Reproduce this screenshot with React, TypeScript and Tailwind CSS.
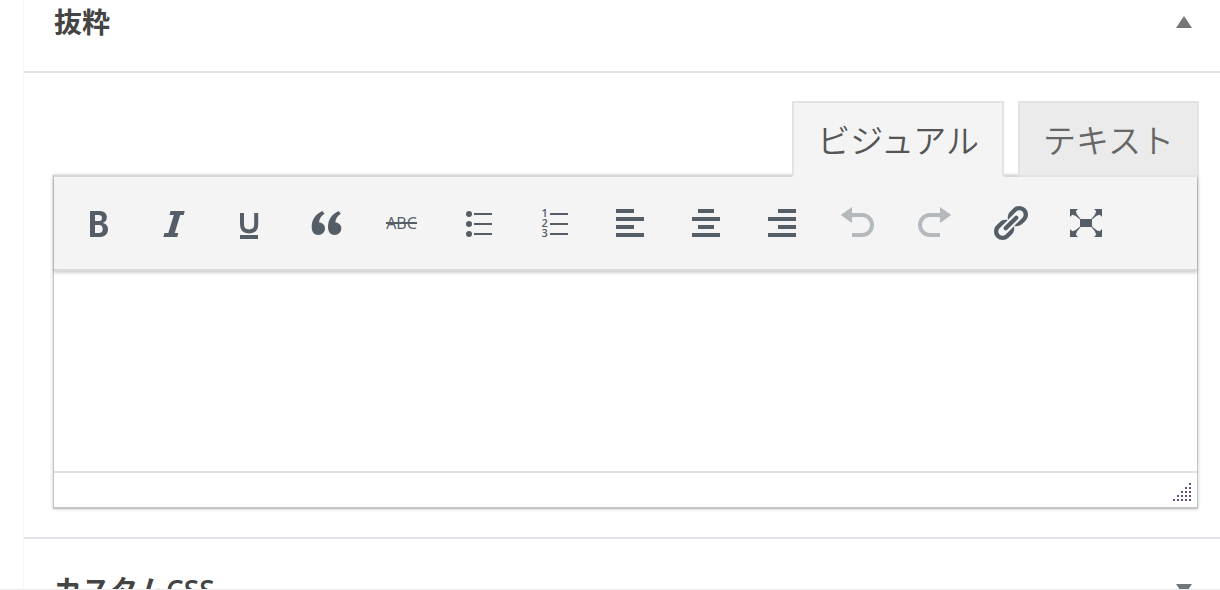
import React, { useState } from "react";

type Tool = { label: string; disabled?: boolean; icon: React.ReactNode };

const UNDO_HEAD = "M2.7 12 14 4v16z";

const tools: Tool[] = [
  {
    label: "太字",
    icon: (
      <path
        fillRule="evenodd"
        d="M12 8h8.600c5.300 0 8.200 2 8.200 6.300 0 2.900-1.500 4.900-4 5.600 3.300.7 5.200 2.900 5.200 6.300 0 5-3.500 7.800-9 7.800h-9zM17 12v6h3.500c2.400 0 3.500-1 3.500-3.100 0-2-1.100-2.900-3.500-2.900zM17 22v8h4c2.500 0 3.700-1.400 3.700-4s-1.200-4-3.700-4z"
      />
    ),
  },
  {
    label: "イタリック",
    icon: <path d="M16.500 8h14.200l-1 4h-3.500l-5.500 18h3.600l-1 4h-14l1.200-4h3.800l5.500-18h-4.300z" />,
  },
  {
    label: "下線",
    icon: (
      <>
        <path d="M12 10v11.200c0 4.800 2.500 7.200 7.100 7.200s7.100-2.400 7.100-7.200V10" fill="none" stroke="currentColor" strokeWidth="4" />
        <path d="M10 32h18v4H10z" />
      </>
    ),
  },
  {
    label: "引用",
    icon: (
      <>
        <path d="M16.300 8C9 11.500 5.700 17 5.700 24c0 5 2.600 8 6.600 8s6.700-2.800 6.700-6.400-2.600-6-6-6c.3-3.800 2-6.600 5.500-8.800z" />
        <path d="M32.600 8C25.300 11.500 22 17 22 24c0 5 2.600 8 6.600 8s6.700-2.800 6.700-6.400-2.600-6-6-6c.3-3.800 2-6.600 5.500-8.800z" />
      </>
    ),
  },
  {
    label: "打ち消し",
    icon: (
      <>
        <text x="19.500" y="26" textAnchor="middle" className="font-['Open_Sans',sans-serif] text-[16px] font-medium">ABC</text>
        <path d="M4 19h31v2H4z" />
      </>
    ),
  },
  {
    label: "番号なしリスト",
    icon: (
      <>
        <circle cx="11" cy="11" r="3" />
        <circle cx="11" cy="21" r="3" />
        <circle cx="11" cy="31" r="3" />
        <path d="M16 10h18v2H16zM16 20h18v2H16zM16 30h18v2H16z" />
      </>
    ),
  },
  {
    label: "番号付きリスト",
    icon: (
      <>
        <g className="font-['Open_Sans',sans-serif] text-[11px] font-semibold">
          <text x="7.500" y="14">1</text>
          <text x="7.500" y="24">2</text>
          <text x="7.500" y="34">3</text>
        </g>
        <path d="M16 10h18v2H16zM16 20h18v2H16zM16 30h18v2H16z" />
      </>
    ),
  },
  { label: "左寄せ", icon: <path d="M6 6h18v4H6zM6 14h28v4H6zM6 22h18v4H6zM6 30h28v4H6z" /> },
  { label: "中央揃え", icon: <path d="M12 6h16v4H12zM6 14h28v4H6zM12 22h16v4H12zM6 30h28v4H6z" /> },
  { label: "右寄せ", icon: <path d="M16 6h18v4H16zM6 14h28v4H6zM16 22h18v4H16zM6 30h28v4H6z" /> },
  {
    label: "取り消し",
    disabled: true,
    icon: (
      <>
        <path d={UNDO_HEAD} />
        <path d="M13 12h11a10 10 0 0 1 0 20H14" fill="none" stroke="currentColor" strokeWidth="4" />
      </>
    ),
  },
  {
    label: "やり直し",
    disabled: true,
    icon: (
      <g transform="matrix(-1 0 0 1 40 0)">
        <path d={UNDO_HEAD} />
        <path d="M13 12h11a10 10 0 0 1 0 20H14" fill="none" stroke="currentColor" strokeWidth="4" />
      </g>
    ),
  },
  {
    label: "リンクの挿入",
    icon: (
      <path
        transform="scale(2)"
        d="M17.740 2.760c1.680 1.690 1.680 4.410 0 6.100l-1.530 1.520c-1.120 1.120-2.700 1.470-4.140 1.090l2.620-2.610.76-.77.76-.76c.84-.84.84-2.200 0-3.040-.84-.85-2.200-.85-3.040 0l-.77.76-3.380 3.380c-.37-1.440-.02-3.020 1.100-4.140l1.520-1.530c1.690-1.680 4.420-1.680 6.100 0zM8.590 13.430l5.340-5.340c.42-.42.42-1.100 0-1.520-.44-.43-1.130-.39-1.530 0l-5.330 5.340c-.42.42-.42 1.100 0 1.520.44.43 1.130.39 1.520 0zm-.76 2.290l4.140-4.150c.38 1.440.03 3.020-1.090 4.140l-1.520 1.530c-1.690 1.680-4.410 1.680-6.100 0-1.680-1.680-1.680-4.420 0-6.100l1.530-1.520c1.120-1.120 2.700-1.470 4.140-1.100l-4.140 4.150c-.85.84-.85 2.200 0 3.050.84.84 2.200.84 3.040 0z"
      />
    ),
  },
  {
    label: "フルスクリーン",
    icon: (
      <path d="M14 16h12v8H14zM4 6h8l-2.200 2.200 1.200 3.300 3.600 4.500-.6.600-4.600-3.800-3.200-1L4 14zM36 6v8l-2.200-2.200-3.200 1-4.600 3.800-.6-.6 3.600-4.500 1.200-3.300L28 6zM4 34v-8l2.200 2.200 3.200-1 4.600-3.800.6.600-3.600 4.500-1.200 3.300L12 34zM36 34h-8l2.200-2.200-1.200-3.300-3.600-4.500.6-.6 4.600 3.800 3.200 1L36 26z" />
    ),
  },
];

const gripDots = [0, 1, 2, 3, 4].flatMap((row) =>
  Array.from({ length: row + 1 }, (_, i) => ({ x: 16 - i * 4, y: row * 4 }))
);

function BoxHeader({ title, open }: { title: string; open: boolean }) {
  return (
    <header className="flex items-center justify-between pr-7 pl-[30px]">
      <h2 className="text-[28px] leading-[44px] font-semibold text-[#444]">{title}</h2>
      <button type="button" aria-label={`パネルを切り替え: ${title}`} aria-expanded={open} className="text-[#72777c]">
        <svg width="16" height="12" viewBox="0 0 16 12" fill="currentColor">
          <path d={open ? "M8 0l8 12H0z" : "M0 0h16L8 12z"} />
        </svg>
      </button>
    </header>
  );
}

export default function App() {
  const [tab, setTab] = useState<"visual" | "text">("visual");
  const [value, setValue] = useState("");
  const tabBase =
    "h-[76px] border-2 px-[23px] text-[33px] leading-[48px] font-[350] font-['Noto_Sans_CJK_JP',sans-serif]";
  const active = "border-[#e3e3e3] border-b-[#f4f4f4] bg-[#f4f4f4] text-[#555]";
  const inactive = "border-[#e3e3e3] bg-[#ebebeb] text-[#666]";

  return (
    <div className="h-screen overflow-hidden border-b border-[#ececee] bg-white pl-[23px] font-['Open_Sans','Noto_Sans_CJK_JP',sans-serif]">
      <main className="border-l border-[#f6f6f7]">
        <section className="border-b-2 border-[#e2e2e8] pb-7">
          <div className="border-b-2 border-[#e2e2e8] pb-[27px]">
            <BoxHeader title="抜粋" open />
          </div>
          <div className="pt-7 pr-[21px] pl-7">
            <div role="tablist" className="relative z-10 -mb-[2px] flex justify-end gap-[14px]">
              <button
                type="button"
                role="tab"
                aria-selected={tab === "visual"}
                onClick={() => setTab("visual")}
                className={`${tabBase} ${tab === "visual" ? active : inactive}`}
              >
                ビジュアル
              </button>
              <button
                type="button"
                role="tab"
                aria-selected={tab === "text"}
                onClick={() => setTab("text")}
                className={`${tabBase} ${tab === "text" ? active : inactive}`}
              >
                テキスト
              </button>
            </div>
            <div className="px-[2px] pb-[2px]">
              <div className="border-t-2 border-[#d8d8d8] shadow-[0_1px_0_1px_#c4c6c5,0_1px_3px_1px_rgba(0,0,0,0.25)]">
                <div
                  role="toolbar"
                  className="relative flex h-[94px] border-b-2 border-[#dadada] bg-[#f4f4f4] pl-[6px] shadow-[0_2px_3px_rgba(0,0,0,0.2)]"
                >
                  {tools.map((tool) => (
                    <button
                      key={tool.label}
                      type="button"
                      aria-label={tool.label}
                      disabled={tool.disabled}
                      className={`flex w-[76px] items-center justify-center ${
                        tool.disabled ? "text-[#b4b9be]" : "text-[#555d66]"
                      }`}
                    >
                      <svg width="40" height="40" viewBox="0 0 40 40" fill="currentColor">
                        {tool.icon}
                      </svg>
                    </button>
                  ))}
                </div>
                <textarea
                  aria-label="抜粋"
                  value={value}
                  onChange={(e) => setValue(e.target.value)}
                  className="block h-[200px] w-full resize-none bg-white p-6 text-[28px] text-[#333] outline-none"
                />
                <div className="flex h-9 items-end justify-end border-t-2 border-[#e2e2e2] bg-white pr-[6px] pb-[6px]">
                  <svg width="18" height="18" viewBox="0 0 18 18" fill="#66507c">
                    {gripDots.map((d) => (
                      <rect key={`${d.x}-${d.y}`} x={d.x} y={d.y} width="2" height="2" />
                    ))}
                  </svg>
                </div>
              </div>
            </div>
          </div>
        </section>
        <section className="pt-[29px]">
          <BoxHeader title="カスタムCSS" open={false} />
        </section>
      </main>
    </div>
  );
}
